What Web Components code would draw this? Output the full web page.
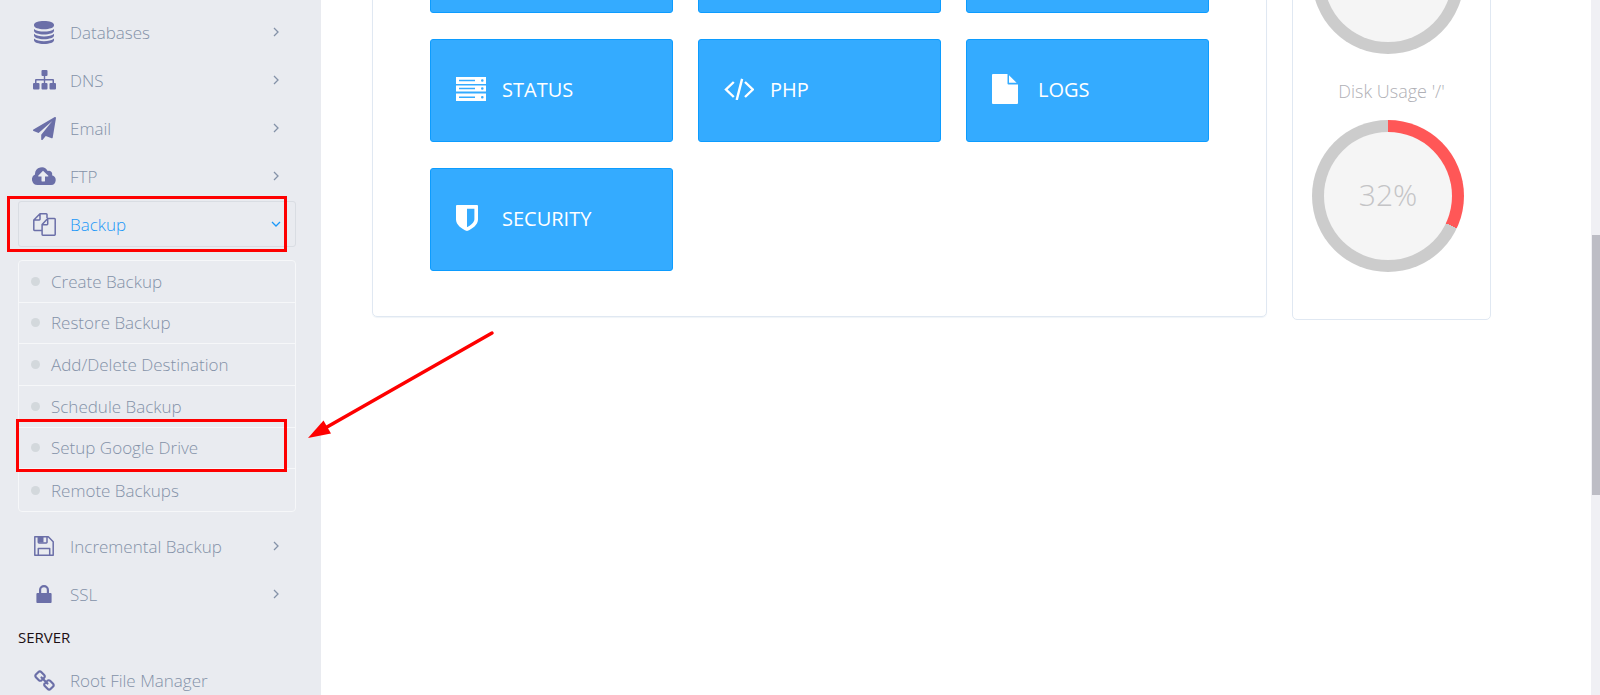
<!DOCTYPE html>
<html lang="en">
<head>
<meta charset="utf-8">
<title>Dashboard</title>
<style>
	html, body {
		margin: 0;
		height: 100%;
		overflow: hidden;
	}

	body {
		font-family: 'Open Sans', sans-serif;
		background: #fff;
	}
</style>
</head>
<body>
<panel-page></panel-page>

<script>
// FontAwesome style glyphs, each with its own viewBox
const ICONS = {
	database: ['0 0 20 23', '<path d="M10 0c5.500 0 10 1.500 10 3.700v.9c0 2.200-4.500 3.700-10 3.700s-10-1.500-10-3.700v-.9C0 1.500 4.500 0 10 0zM0 8c2 1.900 6 2.600 10 2.600S18 9.900 20 8v1.700c0 2.200-4.500 3.700-10 3.700S0 11.900 0 9.700zM0 12.800c2 1.900 6 2.600 10 2.600s8-.7 10-2.600v1.700c0 2.200-4.500 3.700-10 3.700s-10-1.500-10-3.700zM0 17.600c2 1.900 6 2.600 10 2.600s8-.7 10-2.600v1.700c0 2.200-4.500 3.700-10 3.700s-10-1.500-10-3.700z"/>'],
	sitemap: ['0 0 23 20', '<path d="M9.500 0h4a1 1 0 0 1 1 1v4a1 1 0 0 1-1 1h-1.300v3H20a1 1 0 0 1 1 1v3h1a1 1 0 0 1 1 1v4.500a1 1 0 0 1-1 1h-4.500a1 1 0 0 1-1-1V14a1 1 0 0 1 1-1h2v-2.600h-7.300V13h1.300a1 1 0 0 1 1 1v4.500a1 1 0 0 1-1 1h-4a1 1 0 0 1-1-1V14a1 1 0 0 1 1-1h1.300v-2.600H3.500V13h2a1 1 0 0 1 1 1v4.500a1 1 0 0 1-1 1H1a1 1 0 0 1-1-1V14a1 1 0 0 1 1-1h1v-3a1 1 0 0 1 1-1h7.800V6H9.500a1 1 0 0 1-1-1V1a1 1 0 0 1 1-1z"/>'],
	plane: ['0 0 1792 1792', '<path d="M1764 11q33 24 27 64l-256 1536q-5 29-32 45-14 8-31 8-11 0-24-5l-453-185-242 295q-18 23-49 23-13 0-22-4-19-7-30.500-23.500t-11.500-36.500v-349l864-1059-1069 925-395-162q-37-14-40-55-2-40 32-59l1664-960q15-9 32-9 20 0 36 11z"/>'],
	cloud: ['0 0 24 18', '<path fill-rule="evenodd" d="M5.500 18A5.500 5.500 0 0 1 3 7.600v-.8A6.700 6.700 0 0 1 15.700 4 3.300 3.300 0 0 1 20 8.200 5 5 0 0 1 19.200 18zM11 3.800 6.200 8.700c-.3.500 0 .8.400.8H9.500v4.500c0 .3.200.5.500.5h2.500c.3 0 .5-.2.500-.5V9.500h3c.4 0 .6-.4.300-.8z"/>'],
	copy: ['0 0 23 23', '<path fill="none" stroke="currentColor" stroke-width="1.500" stroke-linejoin="round" d="M9 17.500H1.500a.7.700 0 0 1-.7-.7V7L7 .8h6.300a.7.700 0 0 1 .7.700V5M7 .8V6.300a.7.700 0 0 1-.7.700H.8M14.700 5.500h6.800a.7.700 0 0 1 .7.700v15.300a.7.700 0 0 1-.7.700H9.800a.7.700 0 0 1-.7-.7v-10zM14.700 5.500V11a.7.700 0 0 1-.7.700H9"/>'],
	floppy: ['0 0 20 20', '<path fill="none" stroke="currentColor" stroke-width="1.500" stroke-linejoin="round" d="M.8.800h13.500l4.900 5v13.400H.8zM4.300 19v-6.500h11.400V19M4.300 1v5.200a.7.700 0 0 0 .7.700h7.300a.7.700 0 0 0 .7-.7V1"/><path d="M5 1h4.500v5.500H5z"/>'],
	lock: ['0 0 16 18', '<path fill-rule="evenodd" d="M3 8V5a5 5 0 0 1 10 0v3h1.500c.7 0 1.100.5 1.100 1.100v7.800c0 .6-.5 1.100-1.100 1.100h-13C.900 18 .4 17.500.4 16.900V9.100C.4 8.500.900 8 1.500 8zm2.200 0h5.600V5a2.800 2.800 0 0 0-5.600 0z"/>'],
	chain: ['0 0 21 21', '<g fill="none" stroke="currentColor" stroke-width="2.200" stroke-linecap="round" stroke-linejoin="round"><path d="M8.600 9.300 10.200 7.700a1.900 1.900 0 0 0 0-2.700L7.200 1.900a1.900 1.900 0 0 0-2.700 0L1.900 4.500a1.900 1.900 0 0 0 0 2.700l3 3a1.900 1.900 0 0 0 2.700 0M12.400 11.700l-1.600 1.600a1.900 1.900 0 0 0 0 2.700l3 3.100a1.900 1.900 0 0 0 2.700 0l2.600-2.600a1.900 1.900 0 0 0 0-2.700l-3-3a1.900 1.900 0 0 0-2.700 0M7.500 7.500 13.500 13.500"/></g>'],
	server: ['0 0 30 24', '<path fill-rule="evenodd" d="M0 0h30v7H0zM3 2.800v1.400h16V2.800zM25 3.500a1.300 1.300 0 1 0 2.600 0 1.300 1.300 0 0 0-2.600 0zM0 8.500h30v6H0zM3 10.800v1.400h16v-1.400zM25 11.500a1.300 1.300 0 1 0 2.600 0 1.300 1.300 0 0 0-2.600 0zM0 16.500h30V24H0zM3 19.600V21h16v-1.400zM25 20.200a1.300 1.300 0 1 0 2.600 0 1.300 1.300 0 0 0-2.600 0z"/>'],
	code: ['0 0 30 22', '<path fill="none" stroke="currentColor" stroke-width="2.400" d="M9.800 4 2 11.500l7.800 7.500M21 4l7.800 7.500L21 19M18.100.900 12.700 22"/>'],
	file: ['0 0 26 30', '<path d="M1 0h14.500v9.500a1 1 0 0 0 1 1H26V29a1 1 0 0 1-1 1H1a1 1 0 0 1-1-1V1a1 1 0 0 1 1-1zM17 1.200l7.600 7.600H17z"/>'],
	shield: ['0 0 22 26', '<path fill-rule="evenodd" d="M1 0h20a1 1 0 0 1 1 1v13.500c0 5-5.500 9.500-11 11.500C5.500 24 0 19.500 0 14.500V1a1 1 0 0 1 1-1zM11 3.800v18.400c3.500-1.700 7.400-4.900 7.400-8V3.800z"/>']
};

function icon(name, width) {
	const [box, shape] = ICONS[name];
	return `<svg viewBox="${box}" width="${width}" fill="currentColor" aria-hidden="true">${shape}</svg>`;
}

class NavItem extends HTMLElement {
	constructor() {
		super();
		this.attachShadow({ mode: 'open' });
	}

	connectedCallback() {
		const arrow = this.hasAttribute('open') ? 'M1 3l4 4 4-4' : 'M3 1l4 4-4 4';
		this.shadowRoot.innerHTML = `
			<style>
				:host {
					display: block;
					position: relative;
				}

				a {
					display: flex;
					align-items: center;
					box-sizing: border-box;
					height: 46px;
					padding: 0 14px 0 13px;
					border: 1px solid transparent;
					border-radius: 3px;
					font-size: 17px;
					font-weight: 300;
					color: #8492a8;
					text-decoration: none;
				}

				:host([open]) a {
					color: #1b98f8;
					border-color: #d9dde3;
				}

				.icon {
					display: flex;
					justify-content: center;
					width: 24px;
					margin-right: 14px;
					color: #6b6fa8;
				}

				.label {
					flex: 1;
				}

				.arrow {
					fill: none;
					stroke: currentColor;
					stroke-width: 1.300;
				}
			</style>
			<a href="#">
				<span class="icon">${icon(this.getAttribute('icon'), this.getAttribute('size'))}</span>
				<span class="label"><slot></slot></span>
				${this.hasAttribute('plain') ? '' : `<svg class="arrow" width="10" height="10" viewBox="0 0 10 10" aria-hidden="true"><path d="${arrow}"/></svg>`}
			</a>
			<slot name="mark"></slot>
		`;
	}
}

class SubMenu extends HTMLElement {
	constructor() {
		super();
		this.attachShadow({ mode: 'open' });
		this.shadowRoot.innerHTML = `
			<style>
				:host {
					display: grid;
					grid-auto-rows: 1fr;
					box-sizing: border-box;
					height: 252px;
					margin: 11px 0 9px;
					border: 1px solid #f6f7f9;
					border-radius: 4px;
				}
			</style>
			<slot></slot>
		`;
	}
}

class SubItem extends HTMLElement {
	constructor() {
		super();
		this.attachShadow({ mode: 'open' });
		this.shadowRoot.innerHTML = `
			<style>
				:host {
					display: flex;
					position: relative;
					border-bottom: 1px solid #f6f7f9;
				}

				:host(:last-child) {
					border-bottom: 0;
				}

				a {
					flex: 1;
					display: flex;
					align-items: center;
					gap: 11px;
					padding-left: 12px;
					font-size: 17px;
					font-weight: 300;
					color: #8492a8;
					text-decoration: none;
				}

				a::before {
					content: '';
					width: 9px;
					height: 9px;
					border-radius: 50%;
					background: #d3d8dc;
				}
			</style>
			<a href="#"><span><slot></slot></span></a>
			<slot name="mark"></slot>
		`;
	}
}

// Red frame drawn over the entry it is slotted into
class RedFrame extends HTMLElement {
	constructor() {
		super();
		this.attachShadow({ mode: 'open' });
		this.shadowRoot.innerHTML = `
			<style>
				:host {
					position: absolute;
					inset: var(--frame-inset);
					border: 3px solid #fe0000;
					pointer-events: none;
					z-index: 1;
				}
			</style>
		`;
	}
}

class RedArrow extends HTMLElement {
	constructor() {
		super();
		this.attachShadow({ mode: 'open' });
		this.shadowRoot.innerHTML = `
			<style>
				:host {
					position: absolute;
					left: 289px;
					top: -100px;
					pointer-events: none;
					z-index: 2;
				}

				svg {
					display: block;
				}
			</style>
			<svg width="190" height="112" viewBox="0 0 190 112" aria-hidden="true">
				<path d="M184 5 19 99" stroke="#fe0000" stroke-width="3.500" stroke-linecap="round"/>
				<path d="M0 110 15.500 92.500 23 105.500z" fill="#fe0000"/>
			</svg>
		`;
	}
}

class SideBar extends HTMLElement {
	constructor() {
		super();
		this.attachShadow({ mode: 'open' });
	}

	connectedCallback() {
		this.shadowRoot.innerHTML = `
			<style>
				:host {
					display: block;
					box-sizing: border-box;
					width: 321px;
					padding: 9px 25px 0 18px;
					background: #e9ebf0;
				}

				nav {
					display: flex;
					flex-direction: column;
					gap: 2px;
				}

				h2 {
					margin: 0;
					font-size: 15px;
					font-weight: 400;
					line-height: 36px;
					color: #1c1014;
				}
			</style>
			<nav>
				<nav-item icon="database" size="20">Databases</nav-item>
				<nav-item icon="sitemap" size="23">DNS</nav-item>
				<nav-item icon="plane" size="23">Email</nav-item>
				<nav-item icon="cloud" size="24">FTP</nav-item>
				<nav-item icon="copy" size="23" open>Backup
					<red-frame slot="mark" style="--frame-inset: -5px 9px -5px -11px"></red-frame>
				</nav-item>
				<sub-menu>
					<sub-item>Create Backup</sub-item>
					<sub-item>Restore Backup</sub-item>
					<sub-item>Add/Delete Destination</sub-item>
					<sub-item>Schedule Backup</sub-item>
					<sub-item>Setup Google Drive
						<red-frame slot="mark" style="--frame-inset: -9px 8px -4px -3px"></red-frame>
						<red-arrow slot="mark"></red-arrow>
					</sub-item>
					<sub-item>Remote Backups</sub-item>
				</sub-menu>
				<nav-item icon="floppy" size="20">Incremental Backup</nav-item>
				<nav-item icon="lock" size="16">SSL</nav-item>
				<h2>SERVER</h2>
				<nav-item icon="chain" size="21" plain>Root File Manager</nav-item>
			</nav>
		`;
	}
}

class ActionTile extends HTMLElement {
	constructor() {
		super();
		this.attachShadow({ mode: 'open' });
	}

	connectedCallback() {
		const name = this.getAttribute('icon');
		this.shadowRoot.innerHTML = `
			<style>
				:host {
					display: block;
				}

				a {
					display: flex;
					align-items: center;
					box-sizing: border-box;
					height: 103px;
					padding: 0 25px 3px;
					border: 1px solid #0c9cff;
					border-radius: 3px;
					background: #34abff;
					color: #fff;
					font-size: 20px;
					text-decoration: none;
				}

				.icon {
					display: flex;
					width: 46px;
				}
			</style>
			<a href="#">
				<span class="icon">${name ? icon(name, this.getAttribute('size')) : ''}</span>
				<slot></slot>
			</a>
		`;
	}
}

class TileBoard extends HTMLElement {
	constructor() {
		super();
		this.attachShadow({ mode: 'open' });
		this.shadowRoot.innerHTML = `
			<style>
				:host {
					display: grid;
					grid-template-columns: repeat(3, 1fr);
					gap: 26px 25px;
					padding: 8px 57px 45px;
					border: 1px solid #e0e8f2;
					border-radius: 5px;
					box-shadow: 0 1px 1px #f0f4f8;
				}
			</style>
			<slot></slot>
		`;
	}
}

class UsageGauge extends HTMLElement {
	constructor() {
		super();
		this.attachShadow({ mode: 'open' });
	}

	connectedCallback() {
		const value = this.getAttribute('value');
		this.shadowRoot.innerHTML = `
			<style>
				:host {
					display: block;
				}

				h3 {
					margin: 0;
					font-size: 18px;
					font-weight: 300;
					line-height: 26px;
					padding: 24px 0 16px;
					text-align: center;
					color: #b0b0b6;
				}

				.ring {
					display: grid;
					place-items: center;
					width: 152px;
					height: 152px;
					margin-left: 19px;
					border-radius: 50%;
					background: conic-gradient(#ff5757 ${value || 0}%, #ccc 0);
				}

				.face {
					display: grid;
					place-items: center;
					box-sizing: border-box;
					width: 128px;
					height: 128px;
					padding-bottom: 4px;
					border-radius: 50%;
					background: #f5f5f5;
					color: #c4c4c6;
					font-size: 30px;
					font-weight: 300;
				}
			</style>
			${this.hasAttribute('label') ? `<h3>${this.getAttribute('label')}</h3>` : ''}
			<div class="ring"><div class="face">${value ? value + '%' : ''}</div></div>
		`;
	}
}

class PanelPage extends HTMLElement {
	constructor() {
		super();
		this.attachShadow({ mode: 'open' });
	}

	connectedCallback() {
		this.shadowRoot.innerHTML = `
			<style>
				:host {
					display: flex;
					height: 100%;
					overflow: hidden;
				}

				side-bar {
					flex: none;
					z-index: 1;
				}

				/* the page is scrolled, its first row runs off the top */
				main {
					flex: 1;
					display: flex;
					align-items: flex-start;
					gap: 25px;
					margin-top: -99px;
					padding: 0 100px 0 51px;
				}

				tile-board {
					flex: 1;
				}

				.usage {
					width: 197px;
					padding-bottom: 47px;
					border: 1px solid #e0e8f2;
					border-radius: 5px;
				}

				.scroll {
					display: flex;
					flex-direction: column;
					width: 9px;
					background: #f0f0f4;
				}

				.thumb {
					height: 260px;
					margin: 235px 0 0 1px;
					background: #bdbdc5;
				}
			</style>
			<side-bar></side-bar>
			<main>
				<tile-board>
					<action-tile></action-tile>
					<action-tile></action-tile>
					<action-tile></action-tile>
					<action-tile icon="server" size="30">STATUS</action-tile>
					<action-tile icon="code" size="30">PHP</action-tile>
					<action-tile icon="file" size="26">LOGS</action-tile>
					<action-tile icon="shield" size="22">SECURITY</action-tile>
				</tile-board>
				<section class="usage">
					<usage-gauge></usage-gauge>
					<usage-gauge label="Disk Usage '/'" value="32"></usage-gauge>
				</section>
			</main>
			<div class="scroll"><div class="thumb"></div></div>
		`;
	}
}

customElements.define('nav-item', NavItem);
customElements.define('sub-menu', SubMenu);
customElements.define('sub-item', SubItem);
customElements.define('red-frame', RedFrame);
customElements.define('red-arrow', RedArrow);
customElements.define('side-bar', SideBar);
customElements.define('action-tile', ActionTile);
customElements.define('tile-board', TileBoard);
customElements.define('usage-gauge', UsageGauge);
customElements.define('panel-page', PanelPage);
</script>
</body>
</html>
